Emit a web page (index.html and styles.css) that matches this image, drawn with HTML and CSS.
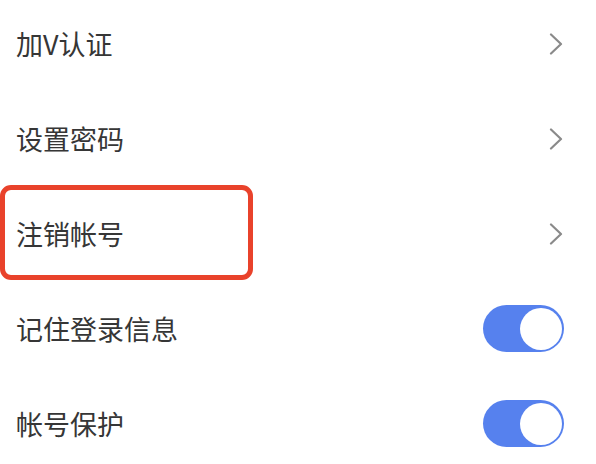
FILE: index.html
```html
<!DOCTYPE html>
<html lang="zh-CN">
<head>
<meta charset="utf-8">
<link rel="stylesheet" href="styles.css">
</head>
<body>
<div class="list">
  <div class="row">
    <span class="label">加V认证</span>
    <svg class="chev" width="14" height="22" viewBox="0 0 14 22"><polyline points="2,1.5 12,11 2,20.5" fill="none" stroke="#8a8a8a" stroke-width="2.2" stroke-linecap="round" stroke-linejoin="round"/></svg>
  </div>
  <div class="row">
    <span class="label">设置密码</span>
    <svg class="chev" width="14" height="22" viewBox="0 0 14 22"><polyline points="2,1.5 12,11 2,20.5" fill="none" stroke="#8a8a8a" stroke-width="2.2" stroke-linecap="round" stroke-linejoin="round"/></svg>
  </div>
  <div class="row highlighted">
    <span class="label">注销帐号</span>
    <svg class="chev" width="14" height="22" viewBox="0 0 14 22"><polyline points="2,1.5 12,11 2,20.5" fill="none" stroke="#8a8a8a" stroke-width="2.2" stroke-linecap="round" stroke-linejoin="round"/></svg>
    <div class="mark"></div>
  </div>
  <div class="row">
    <span class="label">记住登录信息</span>
    <div class="toggle"><div class="knob"></div></div>
  </div>
  <div class="row">
    <span class="label">帐号保护</span>
    <div class="toggle"><div class="knob"></div></div>
  </div>
</div>
</body>
</html>
```
FILE: styles.css
```css
html, body {
  margin: 0;
  padding: 0;
  background: #ffffff;
  overflow: hidden;
}
body {
  font-family: "Noto Sans CJK SC", "Noto Sans", sans-serif;
  color: #363636;
}
.list {
  margin-top: -4px;
  display: flex;
  flex-direction: column;
}
.row {
  position: relative;
  height: 95px;
  display: flex;
  align-items: center;
  justify-content: space-between;
  padding: 0 32px 0 16px;
}
.label {
  font-size: 27px;
  line-height: 1;
}
.chev {
  margin-right: 1px;
  display: block;
}
.mark {
  position: absolute;
  left: 0;
  top: -1px;
  width: 253px;
  height: 95px;
  box-sizing: border-box;
  border: 5px solid #e9422b;
  border-radius: 11px;
}
.toggle {
  width: 81px;
  height: 47px;
  border-radius: 24px;
  background: #5681ee;
  box-sizing: border-box;
  padding: 2px;
  display: flex;
  justify-content: flex-end;
  align-items: center;
}
.knob {
  width: 42px;
  height: 42px;
  border-radius: 50%;
  background: #ffffff;
}
```
